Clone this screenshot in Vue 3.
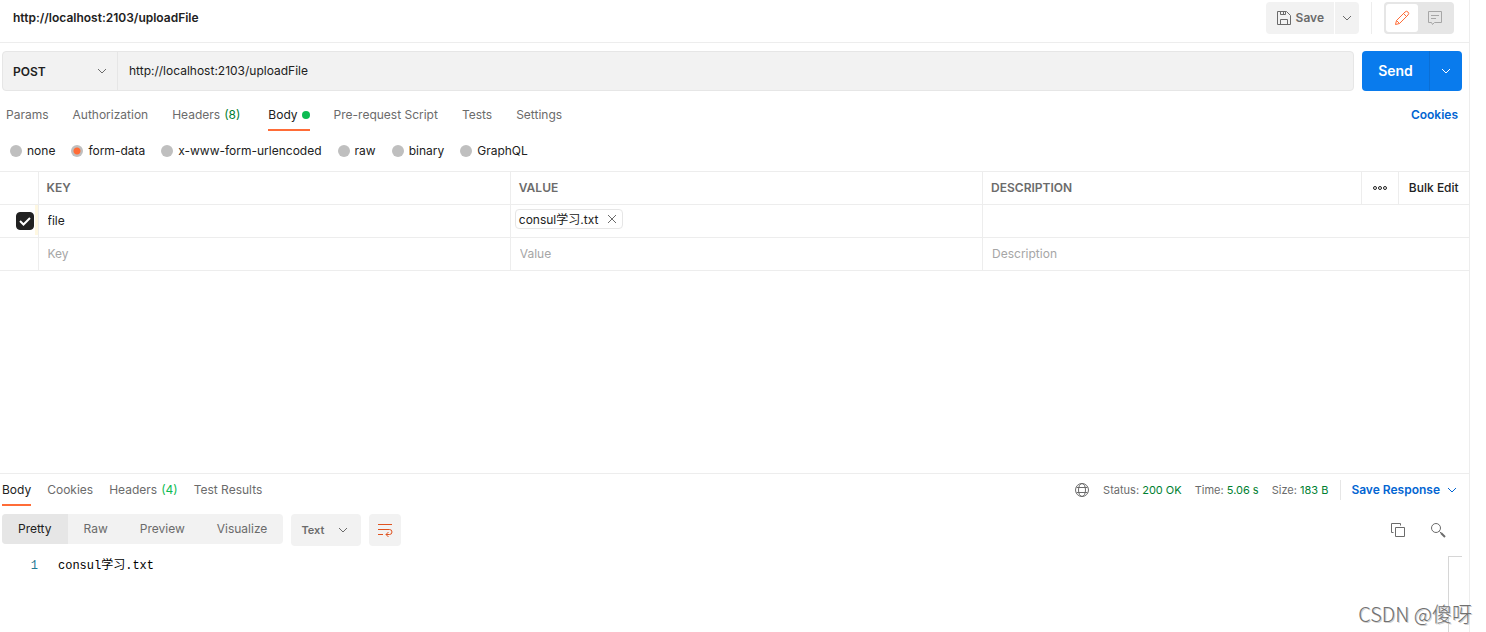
<script setup>
import { ref } from 'vue'

const requestTabs = [
  { name: 'Params' },
  { name: 'Authorization' },
  { name: 'Headers', count: '(8)' },
  { name: 'Body', dot: true },
  { name: 'Pre-request Script' },
  { name: 'Tests' },
  { name: 'Settings' },
]
const activeTab = ref('Body')

const bodyModes = ['none', 'form-data', 'x-www-form-urlencoded', 'raw', 'binary', 'GraphQL']
const bodyMode = ref('form-data')

const responseTabs = [
  { name: 'Body' },
  { name: 'Cookies' },
  { name: 'Headers', count: '(4)' },
  { name: 'Test Results' },
]
const activeResponseTab = ref('Body')

const views = ['Pretty', 'Raw', 'Preview', 'Visualize']
const activeView = ref('Pretty')

const stats = [
  { label: 'Status:', value: '200 OK' },
  { label: 'Time:', value: '5.06 s' },
  { label: 'Size:', value: '183 B' },
]

const url = ref('http://localhost:2103/uploadFile')
const method = ref('POST')
const format = ref('Text')
const rowEnabled = ref(true)
const rowKey = ref('file')
</script>

<template>
  <main class="workspace">
    <header class="titlebar">
      <h1 class="title">{{ url }}</h1>
      <div class="save-group">
        <button class="save" type="button">
          <svg width="16" height="16" viewBox="0 0 16 16" class="line">
            <path d="M1.500 1.500h9l4 4v9h-13zM4.500 1.500v3h5v-3M7.500 1.500v3M4.500 14.500v-5h7v5" />
          </svg>
          Save
        </button>
        <button class="save-more" type="button" aria-label="More save options">
          <svg width="10" height="6" viewBox="0 0 10 6" class="line"><path d="M1 1l4 4 4-4" /></svg>
        </button>
      </div>
      <div class="mode-switch">
        <button class="mode on" type="button" aria-label="Edit">
          <svg width="16" height="16" viewBox="0 0 16 16" class="line">
            <path d="M1.500 14.500l1-4L11 2a1.800 1.800 0 0 1 3 3L5.500 13.500zM2.500 10.500l3 3M9.500 3.500l3 3" />
          </svg>
        </button>
        <button class="mode" type="button" aria-label="Comments">
          <svg width="16" height="16" viewBox="0 0 16 16" class="line">
            <path d="M1.500 1.500h13v11h-7l-2 2-1-2h-3zM4 5.500h8M4 8.500h5" />
          </svg>
        </button>
      </div>
    </header>

    <form class="request-line" @submit.prevent>
      <div class="address">
        <div class="method-wrap">
          <select v-model="method" class="method" aria-label="Method">
            <option>POST</option>
            <option>GET</option>
          </select>
          <svg width="10" height="6" viewBox="0 0 10 6" class="line caret"><path d="M1 1l4 4 4-4" /></svg>
        </div>
        <input v-model="url" class="url" type="text" aria-label="Request URL" />
      </div>
      <div class="send-group">
        <button class="send" type="submit">Send</button>
        <button class="send-more" type="button" aria-label="More send options">
          <svg width="10" height="6" viewBox="0 0 10 6" class="line"><path d="M1 1l4 4 4-4" /></svg>
        </button>
      </div>
    </form>

    <div class="tabbar">
      <nav class="tabs request-tabs">
        <button
          v-for="tab in requestTabs"
          :key="tab.name"
          type="button"
          class="tab"
          :class="{ active: tab.name === activeTab }"
          @click="activeTab = tab.name"
        >
          {{ tab.name }}
          <span v-if="tab.count" class="count">{{ tab.count }}</span>
          <span v-if="tab.dot" class="dot"></span>
        </button>
      </nav>
      <a href="#" class="cookies">Cookies</a>
    </div>

    <div class="modes">
      <label v-for="m in bodyModes" :key="m" class="radio">
        <input v-model="bodyMode" type="radio" name="body-mode" :value="m" />
        {{ m }}
      </label>
    </div>

    <table class="params">
      <colgroup>
        <col class="c-check" />
        <col class="c-key" />
        <col class="c-value" />
        <col />
        <col class="c-more" />
        <col class="c-bulk" />
      </colgroup>
      <thead>
        <tr>
          <th></th>
          <th>KEY</th>
          <th>VALUE</th>
          <th>DESCRIPTION</th>
          <th class="tool">
            <button class="more" type="button" aria-label="Columns">
              <svg width="16" height="6" viewBox="0 0 16 6" class="rings">
                <circle cx="3" cy="3" r="1.500" /><circle cx="8" cy="3" r="1.500" /><circle cx="13" cy="3" r="1.500" />
              </svg>
            </button>
          </th>
          <th class="tool"><button class="bulk" type="button">Bulk Edit</button></th>
        </tr>
      </thead>
      <tbody>
        <tr>
          <td class="check-cell">
            <label class="check">
              <input v-model="rowEnabled" type="checkbox" aria-label="Enable file" />
              <svg width="18" height="18" viewBox="0 0 18 18"><path d="M4 9l3.500 3.500L14 6" /></svg>
            </label>
          </td>
          <td><input v-model="rowKey" class="cell" type="text" aria-label="Key" /></td>
          <td class="file-cell">
            <span class="chip">
              <span class="file-name">consul学习.txt</span>
              <button type="button" aria-label="Remove file">
                <svg width="10" height="10" viewBox="0 0 10 10" class="line"><path d="M1 1l8 8M9 1l-8 8" /></svg>
              </button>
            </span>
          </td>
          <td colspan="3"><input class="cell" type="text" aria-label="Description" /></td>
        </tr>
        <tr>
          <td></td>
          <td><input class="cell" type="text" placeholder="Key" aria-label="New key" /></td>
          <td><input class="cell" type="text" placeholder="Value" aria-label="New value" /></td>
          <td colspan="3"><input class="cell" type="text" placeholder="Description" aria-label="New description" /></td>
        </tr>
      </tbody>
    </table>

    <section class="response">
      <div class="response-head">
        <nav class="tabs response-tabs">
          <button
            v-for="tab in responseTabs"
            :key="tab.name"
            type="button"
            class="tab"
            :class="{ active: tab.name === activeResponseTab }"
            @click="activeResponseTab = tab.name"
          >
            {{ tab.name }}
            <span v-if="tab.count" class="count light">{{ tab.count }}</span>
          </button>
        </nav>
        <div class="stats">
          <svg width="16" height="16" viewBox="0 0 16 16" class="line globe">
            <circle cx="8" cy="8" r="6.500" />
            <ellipse cx="8" cy="8" rx="3.500" ry="6.500" />
            <path d="M2.500 5.500h11M2.500 10.500h11" />
          </svg>
          <span v-for="s in stats" :key="s.label">{{ s.label }} <b>{{ s.value }}</b></span>
        </div>
        <button class="save-response" type="button">
          Save Response
          <svg width="10" height="6" viewBox="0 0 10 6" class="line"><path d="M1 1l4 4 4-4" /></svg>
        </button>
      </div>

      <div class="toolbar">
        <div class="views">
          <button
            v-for="v in views"
            :key="v"
            type="button"
            class="view"
            :class="{ active: v === activeView }"
            @click="activeView = v"
          >{{ v }}</button>
        </div>
        <div class="format-wrap">
          <select v-model="format" class="format" aria-label="Response format">
            <option>Text</option>
            <option>JSON</option>
          </select>
          <svg width="10" height="6" viewBox="0 0 10 6" class="line caret"><path d="M1 1l4 4 4-4" /></svg>
        </div>
        <button class="wrap" type="button" aria-label="Wrap lines">
          <svg width="16" height="14" viewBox="0 0 16 14" class="line">
            <path d="M1 1.500h14M1 6.500h11.500a2.500 2.500 0 0 1 0 5H9M1 11.500h5M11.500 9L9 11.500l2.500 2.500" />
          </svg>
        </button>
        <div class="tools">
          <button type="button" aria-label="Copy">
            <svg width="16" height="16" viewBox="0 0 16 16" class="line">
              <path d="M5.500 5.500h9v9h-9zM3.500 10.500h-2v-9h9v2" />
            </svg>
          </button>
          <button type="button" aria-label="Search">
            <svg width="16" height="16" viewBox="0 0 16 16" class="line">
              <circle cx="6" cy="6" r="4.500" /><path d="M9.500 9.500l5 5" /><path d="M11 11l4 4" class="thick" />
            </svg>
          </button>
        </div>
      </div>

      <div class="viewer">
        <span class="line-no">1</span>
        <code class="code">consul学习.txt</code>
        <div class="ruler"></div>
      </div>
    </section>
    <div class="watermark">CSDN @傻呀</div>
  </main>
</template>

<style>
body {
  background: #fff;
}
</style>

<style scoped>
.workspace {
  position: relative;
  display: flex;
  flex-direction: column;
  box-sizing: border-box;
  min-height: 100vh;
  margin-right: 16px;
  border-right: 1px solid #ededed;
  font: 12px/16px Inter, "Noto Sans CJK SC", sans-serif;
  color: #212121;
}
.workspace *,
.workspace *::before {
  box-sizing: border-box;
}
button,
input,
select {
  margin: 0;
  padding: 0;
  border: 0;
  background: none;
  font: inherit;
  color: inherit;
  outline: 0;
  appearance: none;
}
svg {
  display: block;
  flex: none;
}
.line {
  fill: none;
  stroke: currentColor;
  stroke-width: 1;
}

.titlebar {
  display: flex;
  align-items: flex-start;
  height: 43px;
  padding: 2px 15px 0 13px;
  border-bottom: 1px solid #ededed;
}
.title {
  flex: 1;
  margin: 8px 0 0;
  font-size: 12px;
  font-weight: 600;
}
.save-group {
  display: flex;
  gap: 1px;
  color: #6b6b6b;
}
.save {
  display: flex;
  align-items: center;
  gap: 4px;
  height: 32px;
  padding: 0 10px;
  border-radius: 4px 0 0 4px;
  background: #f2f2f2;
  font-weight: 600;
}
.save-more {
  display: grid;
  place-items: center;
  width: 24px;
  border-radius: 0 4px 4px 0;
  background: #f2f2f2;
}
.mode-switch {
  display: flex;
  gap: 1px;
  position: relative;
  height: 32px;
  margin-left: 25px;
  padding: 2px 3px 2px 2px;
  border-radius: 4px;
  background: #e6e6e6;
}
.mode-switch::before {
  content: "";
  position: absolute;
  left: -13px;
  top: 0;
  width: 1px;
  height: 32px;
  background: #ededed;
}
.mode {
  display: grid;
  place-items: center;
  width: 32px;
  border-radius: 3px;
  color: #a6a6a6;
}
.mode.on {
  background: #fff;
  color: #ff6c37;
}

.request-line {
  display: flex;
  gap: 8px;
  padding: 8px 7px 0 2px;
}
.address {
  display: flex;
  flex: 1;
  height: 40px;
  border: 1px solid #e6e6e6;
  border-radius: 4px;
  background: #f2f2f2;
}
.method-wrap,
.format-wrap {
  position: relative;
  display: flex;
}
.method-wrap {
  width: 115px;
  border-right: 1px solid #e6e6e6;
}
.caret {
  position: absolute;
  right: 10px;
  top: 50%;
  margin-top: -3px;
  color: #6b6b6b;
  pointer-events: none;
}
.method {
  width: 100%;
  padding: 2px 0 0 10px;
  font-weight: 600;
}
.url {
  flex: 1;
  padding: 0 11px;
}
.send-group {
  display: flex;
  height: 40px;
  border-radius: 4px;
  background: #097bed;
  color: #fff;
}
.send {
  width: 67px;
  font-size: 14px;
  font-weight: 600;
}
.send-more {
  display: grid;
  place-items: center;
  width: 33px;
  border-left: 1px solid #0a6fd6;
}

.tabbar {
  display: flex;
  justify-content: space-between;
  padding: 8px 11px 0 6px;
}
.tabs {
  display: flex;
  gap: 24px;
}
.tab {
  display: flex;
  align-items: center;
  gap: 4px;
  height: 32px;
  padding-top: 2px;
  border-bottom: 2px solid transparent;
  color: #6b6b6b;
  white-space: nowrap;
}
.tab.active {
  border-color: #ff6c37;
  color: #212121;
}
.count {
  color: #007f31;
}
.request-tabs .count {
  margin-right: 4px;
}
.count.light {
  color: #0cbb52;
}
.dot {
  width: 8px;
  height: 8px;
  border-radius: 50%;
  background: #0cbb52;
}
.cookies {
  margin-top: 8px;
  color: #0265d2;
  font-weight: 600;
  text-decoration: none;
}

.modes {
  display: flex;
  gap: 16px;
  height: 40px;
  padding: 0 10px;
}
.radio {
  display: flex;
  align-items: center;
  gap: 5px;
}
.radio input {
  width: 12px;
  height: 12px;
  border-radius: 50%;
  background: #bfbfbf;
}
.radio input:checked {
  background: radial-gradient(circle, #ff6c37 3px, #bfbfbf 4px);
}

.params {
  width: 100%;
  border-collapse: collapse;
  table-layout: fixed;
  border-bottom: 1px solid #ededed;
}
.c-check {
  width: 38px;
}
.c-key,
.c-value {
  width: 32.15%;
}
.c-more {
  width: 37px;
}
.c-bulk {
  width: 71px;
}
th,
td {
  height: 33px;
  padding: 0;
  border-top: 1px solid #ededed;
  border-left: 1px solid #ededed;
  text-align: left;
}
td {
  vertical-align: top;
}
th:first-child,
td:first-child {
  border-left: 0;
}
th {
  padding-left: 8px;
  color: #6b6b6b;
  font-weight: 600;
}
th.tool {
  padding: 0;
  text-align: center;
}
.more {
  display: grid;
  place-items: center;
  width: 100%;
}
.rings {
  fill: none;
  stroke: #212121;
  stroke-width: 1;
}
.bulk {
  color: #212121;
  font-weight: 500;
}
.cell {
  display: block;
  width: 100%;
  height: 30px;
  padding: 0 9px;
}
.cell::placeholder {
  color: #a6a6a6;
  opacity: 1;
}
.check {
  display: block;
  position: relative;
  width: 18px;
  height: 18px;
  margin-left: 16px;
}
.check input {
  display: block;
  width: 18px;
  height: 18px;
  border: 1px solid #a6a6a6;
  border-radius: 4px;
}
.check input:checked {
  border-color: #212121;
  background: #212121;
}
.check svg {
  position: absolute;
  inset: 0;
  fill: none;
  stroke: #fff;
  stroke-width: 2;
}
.check-cell {
  vertical-align: middle;
  background: linear-gradient(#fff8e1, #fff8e1) right top / 3px 30px no-repeat;
}
.file-cell {
  padding: 0 4px 4px;
  vertical-align: middle;
}
.chip {
  display: inline-flex;
  align-items: center;
  gap: 9px;
  height: 20px;
  padding: 0 5px 0 3px;
  border: 1px solid #e6e6e6;
  border-radius: 4px;
  vertical-align: middle;
}
.file-name {
  padding-top: 2px;
}
.chip button {
  color: #6b6b6b;
}

.response {
  flex: 1;
  display: flex;
  flex-direction: column;
  margin-top: 202px;
  border-top: 1px solid #ededed;
}
.response-head {
  display: flex;
  align-items: flex-start;
  padding: 0 12px 0 2px;
}
.response-tabs {
  flex: 1;
  gap: 16px;
}
.stats {
  display: flex;
  align-items: center;
  gap: 13px;
  height: 32px;
  padding-right: 12px;
  color: #6b6b6b;
  font-size: 11px;
}
.stats b {
  color: #007f31;
  font-weight: 400;
}
.globe {
  color: #6b6b6b;
}
.save-response {
  display: flex;
  align-items: center;
  gap: 7px;
  height: 20px;
  margin-top: 6px;
  padding-left: 10px;
  border-left: 1px solid #e6e6e6;
  color: #0265d2;
  font-weight: 600;
}

.toolbar {
  display: flex;
  align-items: flex-start;
  gap: 8px;
  padding: 8px 23px 0 2px;
}
.views {
  display: flex;
  overflow: hidden;
  border-radius: 4px;
  background: #f2f2f2;
}
.view {
  height: 30px;
  padding: 0 16px;
  color: #6b6b6b;
}
.view.active {
  background: #e6e6e6;
  color: #212121;
}
.format-wrap {
  width: 70px;
  height: 32px;
  border-radius: 4px;
  background: #f2f2f2;
}
.format {
  width: 100%;
  padding-left: 10px;
  color: #6b6b6b;
  font-size: 11px;
  font-weight: 600;
}
.format-wrap .caret {
  right: 13px;
}
.wrap {
  display: grid;
  place-items: center;
  width: 32px;
  height: 32px;
  border-radius: 4px;
  background: #f2f2f2;
  color: #e05320;
}
.tools {
  display: flex;
  gap: 24px;
  margin: 8px 0 0 auto;
  color: #6b6b6b;
}
.thick {
  stroke-width: 2;
}

.viewer {
  flex: 1;
  display: flex;
  padding-right: 7px;
  margin-top: 10px;
  font: 12px/20px "Liberation Mono", "Noto Sans CJK SC", monospace;
}
.line-no {
  width: 38px;
  color: #237893;
  text-align: right;
}
.code {
  flex: 1;
  margin-left: 20px;
  color: #000;
  font: inherit;
}
.ruler {
  width: 14px;
  border: solid #d6d6d6;
  border-width: 1px 0 0 1px;
}
.watermark {
  position: absolute;
  right: -3px;
  bottom: 4px;
  color: #707070;
  font: 300 20px/28px "Noto Sans CJK SC", sans-serif;
  text-shadow: 1px 1px 0 #d0d0d0;
}
</style>
